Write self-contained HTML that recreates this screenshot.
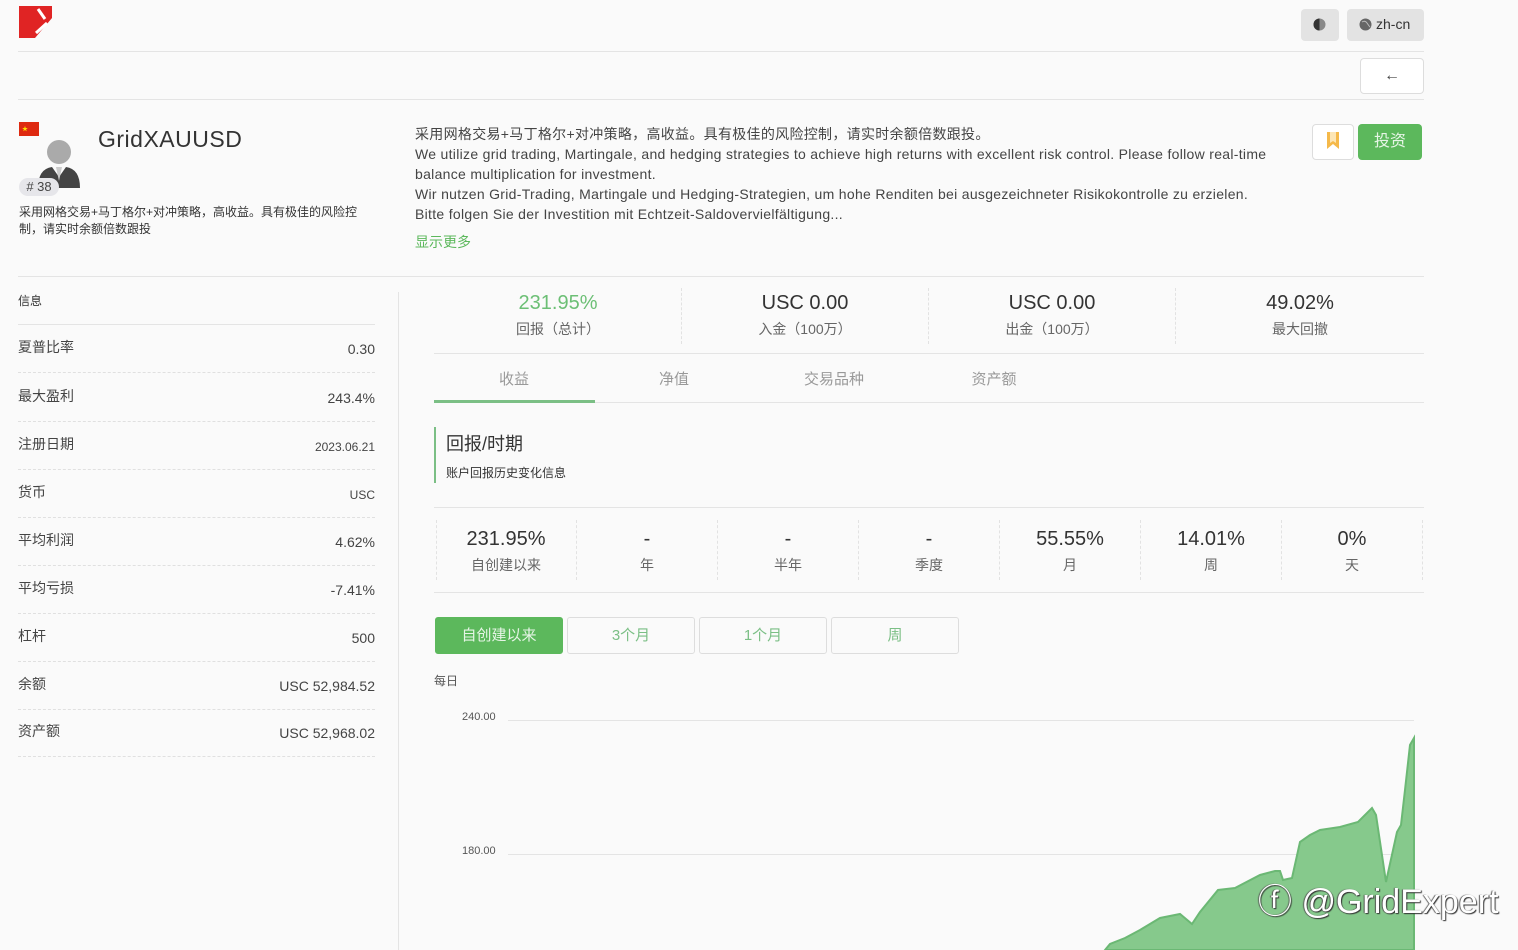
<!DOCTYPE html>
<html><head><meta charset="utf-8"><style>
*{margin:0;padding:0;box-sizing:border-box}
body{width:1518px;height:950px;overflow:hidden;background:#fafafa;font-family:"Liberation Sans","Noto Sans CJK SC",sans-serif;color:#333;position:relative}
.a{position:absolute}
.hr{position:absolute;height:1px;background:#e4e4e4}
.btn{position:absolute;border-radius:4px}
.row{position:absolute;left:18px;width:357px;height:48px;border-bottom:1px dashed #e0e0e0;font-size:14px;color:#444}
.row span{position:absolute;bottom:15px}
.row .r{right:0}
.st{position:absolute;text-align:center;width:140px}
.st b{display:block;font-weight:normal;font-size:20px;color:#333}
.st i{display:block;font-style:normal;font-size:14px;color:#666;margin-top:4px}
.vd{position:absolute;width:0;border-left:1px dashed #e2e2e2}
.tab{position:absolute;top:368px;width:160px;text-align:center;font-size:15px;color:#999}
.pb{position:absolute;top:617px;width:128px;height:37px;border:1px solid #ddd;border-radius:3px;text-align:center;line-height:35px;font-size:15px;color:#7bbf85;background:#fafafa}
</style></head><body>
<svg class="a" style="left:19px;top:6px" width="33" height="32" viewBox="0 0 33 32"><path d="M0 0H33V12L16 32H0Z" fill="#e02424"/><path d="M19 3L26 13" stroke="#fff" stroke-width="3"/><path d="M17 27L28 17" stroke="#fff" stroke-width="3"/><path d="M22 32L33 20V32Z" fill="#fafafa"/></svg>
<div class="btn" style="left:1301px;top:9px;width:38px;height:32px;background:#e3e3e3"></div>
<svg class="a" style="left:1313px;top:18px" width="13" height="13"><circle cx="6.5" cy="6.5" r="6" fill="#888"/><path d="M6.5 .5A6 6 0 0 0 6.5 12.5Z" fill="#333"/></svg>
<div class="btn" style="left:1347px;top:9px;width:77px;height:32px;background:#e3e3e3"></div>
<svg class="a" style="left:1359px;top:18px" width="13" height="13"><circle cx="6.5" cy="6.5" r="6" fill="#666"/><path d="M3 4Q6 2 8 5T11 9" stroke="#bbb" fill="none"/></svg>
<div class="a" style="left:1376px;top:16px;font-size:14px;color:#333">zh-cn</div>
<div class="hr" style="left:18px;top:51px;width:1406px"></div>
<div class="btn" style="left:1360px;top:58px;width:64px;height:36px;border:1px solid #ddd;background:#fff;text-align:center;line-height:34px;font-size:16px;color:#444">&#8592;</div>
<div class="hr" style="left:18px;top:99px;width:1406px"></div>
<div class="a" style="left:19px;top:122px;width:20px;height:14px;background:#de2910"></div>
<div class="a" style="left:22px;top:124px;color:#ffde00;font-size:6px">★</div>
<svg class="a" style="left:36px;top:139px" width="44" height="50"><circle cx="23" cy="13" r="12" fill="#aaa"/><path d="M2 49Q2 30 16 28L23 38L30 28Q44 30 44 49Z" fill="#444"/><path d="M20 28L23 42L26 28Z" fill="#ccc"/></svg>
<div class="a" style="left:19px;top:178px;width:40px;height:18px;border-radius:9px;background:#e6e6ea;font-size:13px;color:#444;text-align:center;line-height:18px"># 38</div>
<div class="a" style="left:98px;top:126px;font-size:23px;color:#333;letter-spacing:0.5px">GridXAUUSD</div>
<div class="a" style="left:19px;top:204px;width:356px;font-size:12px;line-height:17px;color:#333">采用网格交易+马丁格尔+对冲策略，高收益。具有极佳的风险控制，请实时余额倍数跟投</div>
<div class="a" style="left:415px;top:124px;width:866px;font-size:14px;line-height:20px;color:#444;letter-spacing:0.3px">采用网格交易+马丁格尔+对冲策略，高收益。具有极佳的风险控制，请实时余额倍数跟投。<br>We utilize grid trading, Martingale, and hedging strategies to achieve high returns with excellent risk control. Please follow real-time balance multiplication for investment.<br>Wir nutzen Grid-Trading, Martingale und Hedging-Strategien, um hohe Renditen bei ausgezeichneter Risikokontrolle zu erzielen. Bitte folgen Sie der Investition mit Echtzeit-Saldovervielfältigung...</div>
<div class="a" style="left:415px;top:232px;font-size:14px;color:#5cb85c">显示更多</div>
<div class="btn" style="left:1312px;top:124px;width:42px;height:36px;border:1px solid #ddd;background:#fff"></div>
<svg class="a" style="left:1326px;top:132px" width="14" height="18"><path d="M1 0H13V17L7 12L1 17Z" fill="#f5b94a"/><path d="M4 0H10V11L7 9L4 11Z" fill="#fde6b5"/></svg>
<div class="btn" style="left:1358px;top:124px;width:64px;height:36px;background:#5cb85c;color:#e6f5e6;font-size:16px;text-align:center;line-height:36px">投资</div>
<div class="hr" style="left:18px;top:276px;width:1406px"></div>
<div class="a" style="left:18px;top:292px;font-size:12px;color:#333">信息</div>
<div class="hr" style="left:18px;top:324px;width:357px"></div>
<div class="row" style="top:325px"><span>夏普比率</span><span class="r">0.30</span></div>
<div class="row" style="top:374px"><span>最大盈利</span><span class="r">243.4%</span></div>
<div class="row" style="top:422px"><span>注册日期</span><span class="r" style="font-size:12px">2023.06.21</span></div>
<div class="row" style="top:470px"><span>货币</span><span class="r" style="font-size:12px">USC</span></div>
<div class="row" style="top:518px"><span>平均利润</span><span class="r">4.62%</span></div>
<div class="row" style="top:566px"><span>平均亏损</span><span class="r">-7.41%</span></div>
<div class="row" style="top:614px"><span>杠杆</span><span class="r">500</span></div>
<div class="row" style="top:662px"><span>余额</span><span class="r">USC 52,984.52</span></div>
<div class="row" style="top:709px"><span>资产额</span><span class="r">USC 52,968.02</span></div>
<div class="a" style="left:398px;top:292px;width:1px;height:658px;background:#e4e4e4"></div>
<div class="st" style="left:488px;top:292px"><b style="color:#6cbf75">231.95%</b><i>回报（总计）</i></div>
<div class="vd" style="left:681px;top:288px;height:56px"></div>
<div class="st" style="left:735px;top:292px"><b>USC 0.00</b><i>入金（100万）</i></div>
<div class="vd" style="left:928px;top:288px;height:56px"></div>
<div class="st" style="left:982px;top:292px"><b>USC 0.00</b><i>出金（100万）</i></div>
<div class="vd" style="left:1175px;top:288px;height:56px"></div>
<div class="st" style="left:1230px;top:292px"><b>49.02%</b><i>最大回撤</i></div>
<div class="hr" style="left:434px;top:353px;width:990px"></div>
<div class="tab" style="left:434px">收益</div>
<div class="tab" style="left:594px">净值</div>
<div class="tab" style="left:754px">交易品种</div>
<div class="tab" style="left:914px">资产额</div>
<div class="hr" style="left:434px;top:402px;width:990px"></div>
<div class="a" style="left:434px;top:400px;width:161px;height:3px;background:#7bbf85"></div>
<div class="a" style="left:434px;top:427px;width:2px;height:56px;background:#7bbf85"></div>
<div class="a" style="left:446px;top:430px;font-size:18px;color:#333">回报/时期</div>
<div class="a" style="left:446px;top:464px;font-size:12px;color:#333">账户回报历史变化信息</div>
<div class="hr" style="left:434px;top:507px;width:990px"></div>
<div class="st" style="left:436px;top:528px"><b>231.95%</b><i>自创建以来</i></div>
<div class="vd" style="left:436px;top:520px;height:60px"></div>
<div class="vd" style="left:576px;top:520px;height:60px"></div>
<div class="st" style="left:577px;top:528px"><b>-</b><i>年</i></div>
<div class="vd" style="left:717px;top:520px;height:60px"></div>
<div class="st" style="left:718px;top:528px"><b>-</b><i>半年</i></div>
<div class="vd" style="left:858px;top:520px;height:60px"></div>
<div class="st" style="left:859px;top:528px"><b>-</b><i>季度</i></div>
<div class="vd" style="left:999px;top:520px;height:60px"></div>
<div class="st" style="left:1000px;top:528px"><b>55.55%</b><i>月</i></div>
<div class="vd" style="left:1140px;top:520px;height:60px"></div>
<div class="st" style="left:1141px;top:528px"><b>14.01%</b><i>周</i></div>
<div class="vd" style="left:1281px;top:520px;height:60px"></div>
<div class="st" style="left:1282px;top:528px"><b>0%</b><i>天</i></div>
<div class="vd" style="left:1422px;top:520px;height:60px"></div>
<div class="hr" style="left:434px;top:592px;width:990px"></div>
<div class="pb" style="left:435px;background:#5cb85c;border-color:#5cb85c;color:#e6f5e6">自创建以来</div>
<div class="pb" style="left:567px">3个月</div>
<div class="pb" style="left:699px">1个月</div>
<div class="pb" style="left:831px">周</div>
<div class="a" style="left:434px;top:672px;font-size:12px;color:#555">每日</div>
<div class="a" style="left:462px;top:711px;font-size:11px;color:#555">240.00</div>
<div class="a" style="left:462px;top:845px;font-size:11px;color:#555">180.00</div>
<div class="hr" style="left:508px;top:720px;width:906px"></div>
<div class="hr" style="left:508px;top:854px;width:906px"></div>
<svg class="a" style="left:0;top:0" width="1518" height="950"><path d="M1105 950L1110 944L1125 938L1140 930L1160 918L1180 914L1192 924L1200 912L1218 890L1235 888L1260 875L1275 871L1280 871L1283 880L1292 878L1300 842L1310 835L1320 830L1340 827L1358 822L1372 808L1376 815L1386 882L1397 832L1401 825L1405 790L1410 745L1414 738L1414 950Z" fill="#86c98c" stroke="#6bb874" stroke-width="2"/></svg>
<div class="a" style="left:1258px;top:874px;font-size:34px;color:#fff;text-shadow:1px 1px 1px #333,-1px 0 1px #555">ⓕ @GridExpert</div>
</body></html>
